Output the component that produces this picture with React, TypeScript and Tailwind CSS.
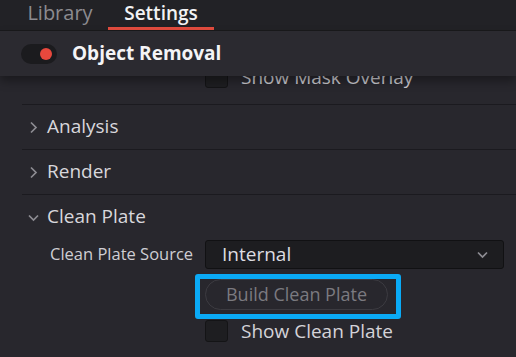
import React from "react";

const Chevron = ({ open }: { open?: boolean }) => (
  <svg width="11" height="13" viewBox="0 0 11 13" fill="none" className="shrink-0">
    {open ? (
      <path d="M1 4.5 L5.5 9 L10 4.5" stroke="#8d8c92" strokeWidth="1.7" />
    ) : (
      <path d="M3 1.5 L8 6.5 L3 11.5" stroke="#8d8c92" strokeWidth="1.7" />
    )}
  </svg>
);

const Checkbox = () => (
  <div className="w-[23px] h-[22px] rounded-[3px] bg-[#1e1e21] border border-[#141416] shrink-0" />
);

const Section = ({ title, open }: { title: string; open?: boolean }) => (
  <div className="ml-[22px] border-t border-[#1b1a1f] h-[45px] flex items-center gap-[8px] pl-[6px]">
    <Chevron open={open} />
    <span className="text-[19px] leading-[26px] -mt-[2px] text-[#d8d7dc]">{title}</span>
  </div>
);

export default function App() {
  return (
    <div
      className="w-[516px] h-[357px] overflow-hidden bg-[#28272d] flex flex-col"
      style={{ fontFamily: '"Open Sans", sans-serif' }}
    >
      {/* tabs */}
      <div className="h-[31px] bg-[#222226] border-b border-[#19191c] flex items-end shrink-0">
        <div className="w-[108px] h-[30px] flex justify-center items-start pl-[12px]">
          <span className="text-[20px] leading-[26px] text-[#8c8b90]">Library</span>
        </div>
        <div className="w-[106px] h-[30px] flex justify-center items-start border-b-[3px] border-[#e24c3e]">
          <span className="text-[19px] leading-[26px] font-semibold text-[#f2f2f4]">Settings</span>
        </div>
      </div>

      {/* header */}
      <div className="relative z-10 h-[45px] bg-[#2b2a30] shadow-[0_5px_9px_rgba(0,0,0,0.35)] flex items-center gap-[15px] pl-[21px] shrink-0">
        <div className="w-[36px] h-[20px] rounded-full bg-[#1b1b1e] flex items-center justify-end pr-[5px]">
          <div className="w-[12px] h-[12px] rounded-full bg-[#e8483d]" />
        </div>
        <span className="text-[19px] font-bold text-[#f4f4f6]">Object Removal</span>
      </div>

      {/* scrolled content */}
      <div className="flex flex-col">
        <div className="h-[28px] overflow-hidden">
          <div className="-mt-[10px] flex items-center gap-[13px] pl-[205px] h-[22px]">
            <Checkbox />
            <span className="text-[19px] text-[#c9c8cd]">Show Mask Overlay</span>
          </div>
        </div>
        <Section title="Analysis" />
        <Section title="Render" />
        <Section title="Clean Plate" open />

        <div className="flex items-center pl-[50px] pr-[12px] h-[29px] mt-[1px]">
          <span className="w-[155px] text-[16.5px] text-[#cfced3]">Clean Plate Source</span>
          <div className="flex-1 h-[29px] rounded-[3px] bg-[#1d1d20] border border-[#111113] flex items-center justify-between pl-[16px] pr-[15px]">
            <span className="text-[19px] text-[#dddce0]">Internal</span>
            <Chevron open />
          </div>
        </div>

        <div className="pl-[205px] mt-[10px] relative">
          <div className="w-[183px] h-[31px] rounded-full border border-[#3c3b41] flex items-center justify-center">
            <span className="text-[18px] text-[#7b7a80]">Build Clean Plate</span>
          </div>
          <div className="absolute left-[195px] -top-[5px] w-[206px] h-[45px] rounded-[3px] border-[5px] border-[#0aaaf6]" />
        </div>

        <div className="flex items-center gap-[13px] pl-[205px] mt-[10px] h-[22px]">
          <Checkbox />
          <span className="text-[19px] leading-[22px] text-[#d4d3d8]">Show Clean Plate</span>
        </div>
      </div>
    </div>
  );
}
